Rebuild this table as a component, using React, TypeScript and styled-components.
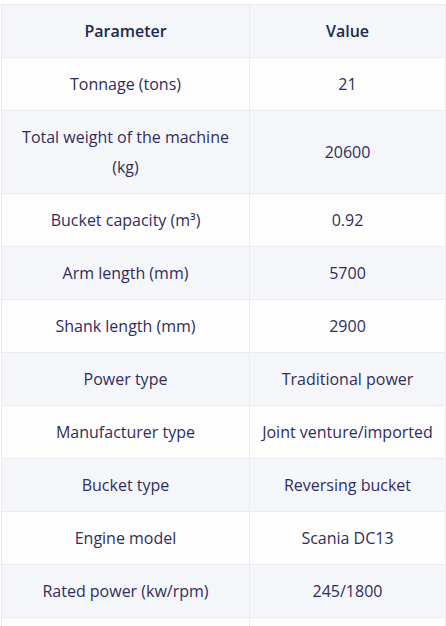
import React from "react";
import styled, { createGlobalStyle } from "styled-components";

interface Spec {
  name: string;
  value: string;
}

const specs: Spec[] = [
  { name: "Tonnage (tons)", value: "21" },
  { name: "Total weight of the machine (kg)", value: "20600" },
  { name: "Bucket capacity (m³)", value: "0.92" },
  { name: "Arm length (mm)", value: "5700" },
  { name: "Shank length (mm)", value: "2900" },
  { name: "Power type", value: "Traditional power" },
  { name: "Manufacturer type", value: "Joint venture/imported" },
  { name: "Bucket type", value: "Reversing bucket" },
  { name: "Engine model", value: "Scania DC13" },
  { name: "Rated power (kw/rpm)", value: "245/1800" },
  { name: "", value: "" },
];

const App: React.FC = () => {
  return (
    <Page>
      <GlobalStyle />
      <Table>
        <colgroup>
          <col style={{ width: 248 }} />
          <col />
        </colgroup>
        <thead>
          <tr>
            <HeadCell>Parameter</HeadCell>
            <HeadCell>Value</HeadCell>
          </tr>
        </thead>
        <tbody>
          {specs.map((s, i) => (
            <Row key={i} striped={i % 2 === 1}>
              <Cell>{s.name}</Cell>
              <Cell>{s.value}</Cell>
            </Row>
          ))}
        </tbody>
      </Table>
    </Page>
  );
};

const GlobalStyle = createGlobalStyle`
  body {
    margin: 0;
    background: #ffffff;
    font-family: "Open Sans", "Noto Sans", sans-serif;
  }
`;

const Page = styled.div`
  padding: 4px 0 0 1px;
  width: 446px;
  height: 626px;
  overflow: hidden;
  box-sizing: border-box;
`;

const Table = styled.table`
  width: 445px;
  border-collapse: collapse;
  table-layout: fixed;
  font-size: 16px;
  line-height: 30px;
  color: #302d5c;
`;

const HeadCell = styled.th`
  background: #f5f6fa;
  border: 1px solid #e9ebf0;
  padding: 11px 8px;
  font-weight: 600;
  color: #1c2a4b;
  text-align: center;
`;

const Row = styled.tr<{ striped: boolean }>`
  background: ${(p) => (p.striped ? "#f5f6fa" : "#fdfdfe")};
`;

const Cell = styled.td`
  border: 1px solid #e9ebf0;
  padding: 11px 8px;
  text-align: center;
`;

export default App;
